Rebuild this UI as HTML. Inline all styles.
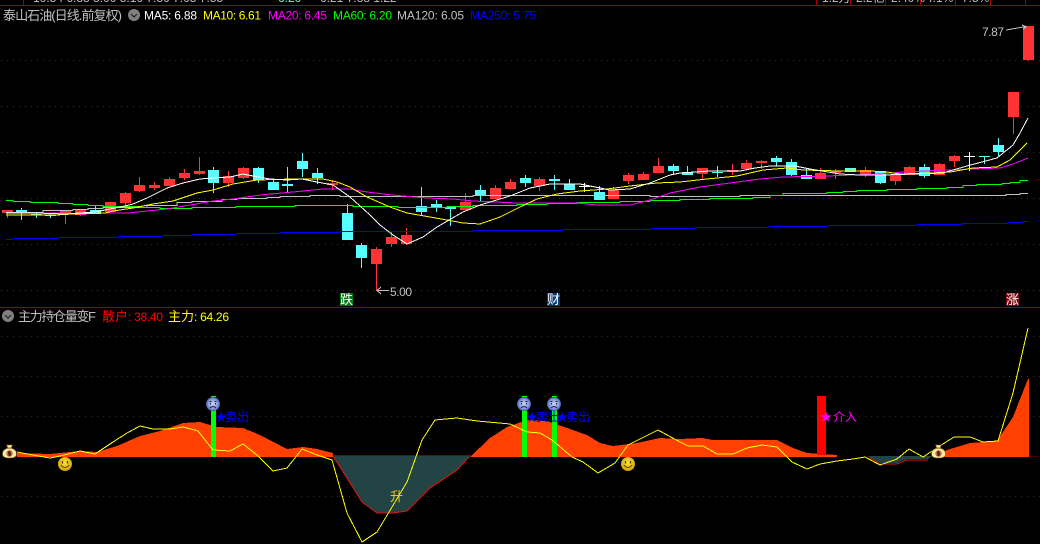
<!DOCTYPE html>
<html><head><meta charset="utf-8"><style>
html,body{margin:0;padding:0;background:#000;width:1040px;height:544px;overflow:hidden}
svg{display:block;position:absolute;left:0;top:0}
text{font-family:"WenQuanYi Zen Hei","Liberation Sans","Noto Sans CJK SC",sans-serif;font-size:12px;text-rendering:optimizeSpeed}
.n{font-family:"Liberation Sans","WenQuanYi Zen Hei",sans-serif;font-size:12px}
</style></head><body>
<svg width="1040" height="544" viewBox="0 0 1040 544" xmlns="http://www.w3.org/2000/svg">
<defs>
<radialGradient id="sg" cx=".5" cy=".5" r=".55"><stop offset="0" stop-color="#c8d4f4"/><stop offset=".65" stop-color="#8098e0"/><stop offset="1" stop-color="#303c80"/></radialGradient>
<radialGradient id="yg" cx=".5" cy=".4" r=".6"><stop offset="0" stop-color="#ffe030"/><stop offset="1" stop-color="#d0a010"/></radialGradient>
<g id="sad"><circle r="7" fill="url(#sg)"/><path d="M-3.5-2.5h2M1.5-2.500h2" stroke="#223" fill="none"/><path d="M-2.500-1v1.500M2.500-1v1.500" stroke="#223" fill="none"/><path d="M-3 4q3-3 6 0" stroke="#223" fill="none"/></g>
<g id="smile"><circle r="7" fill="url(#yg)"/><path d="M-2.500-3v2.500M2.500-3v2.500" stroke="#553c00" stroke-width="1.200" fill="none"/><path d="M-4 1q4 5 8 0" stroke="#553c00" fill="none"/></g>
<g id="bag"><path d="M-3-7h6l-1.500 3q6 2 5.500 6q0 4-6.500 4h-1q-6.500 0-6.500-4q-.5-4 5.500-6z" fill="#ffe9a0" stroke="#7a5a20" stroke-width=".6"/><rect x="-2.500" y="-4.500" width="5" height="1.200" fill="#9a6a20"/><circle cy="1.500" r="3.200" fill="#a87850"/><path d="M1.500 0h-2.500v1.500h2v1.500h-2.500M0-1v5" stroke="#6a1818" fill="none"/></g>
</defs>

<!-- top strip -->
<g class="n" fill="#c0c0c0"><text class="n" x="33" y="2">10.54 6.88 8.00 8.10 7.50 7.05 7.55</text></g>
<text class="n" x="278" y="2" fill="#5ff">6.20</text>
<text class="n" x="320" y="2" fill="#c0c0c0">6.21 7.88 1.22</text>
<text class="n" x="822" y="2" fill="#c0c0c0">1.2万</text><text class="n" x="856" y="2" fill="#c0c0c0">2.2亿</text><text class="n" x="891" y="2" fill="#c0c0c0">2.40%</text><text class="n" x="926" y="2" fill="#c0c0c0">4.1%</text><text class="n" x="962" y="2" fill="#c0c0c0">7.5%</text>
<g shape-rendering="crispEdges" stroke="#a00000" fill="none">
<path d="M0 5.500H1040M0 307.500H1040"/>
<path d="M23.500 0V5M816.500 0V5M850.500 0V5M885.500 0V5M920.500 0V5M955.500 0V5M990.500 0V5M1025.500 0V5"/>
</g>

<!-- dotted grid -->
<g shape-rendering="crispEdges" stroke="#a00000" stroke-dasharray="1 5" fill="none">
<path d="M1 60.500H1040M1 106.500H1040M1 152.500H1040M1 198.500H1040M1 244.500H1040M1 290.500H1040"/>
<path d="M1 336.500H1040M1 376.500H1040M1 416.500H1040M1 496.500H1040M1030 456.500H1040"/>
</g>

<!-- header text -->
<text x="3" y="20" font-size="13" fill="#c0c0c0" style="font-size:13px" textLength="119" lengthAdjust="spacing">泰山石油(日线.前复权)</text>
<circle cx="134" cy="15" r="6" fill="#808080"/><path d="M131 14l3 3 3-3" stroke="#222" stroke-width="1.200" fill="none"/>
<text class="n" x="144" y="19.500" fill="#fff" textLength="53">MA5: 6.88</text>
<text class="n" x="203" y="19.500" fill="#ff0" textLength="58">MA10: 6.61</text>
<text class="n" x="268" y="19.500" fill="#f0f" textLength="59">MA20: 6.45</text>
<text class="n" x="333" y="19.500" fill="#0f0" textLength="59">MA60: 6.20</text>
<text class="n" x="397" y="19.500" fill="#c0c0c0" textLength="67">MA120: 6.05</text>
<text class="n" x="470" y="19.500" fill="#00f" textLength="66">MA250: 5.75</text>

<!-- candles -->
<g shape-rendering="crispEdges">
<path fill="none" stroke="#ff3333" d="M7.500 210V218M65.500 211V224M80.500 210V216M125.500 192V206M139.500 177V192M154.500 182V190M169.500 177V186M184.500 169V180M199.500 157V175M228.500 171V187M243.500 167V179M332.500 180V190M376.500 247V291M391.500 232V247M406.500 228V245M465.500 193V210M495.500 185V199M510.500 179V190M539.500 177V191M613.500 187V199M628.500 173V184M643.500 172V180M658.500 158V173M702.500 168V179M732.500 164V175M746.500 160V170M761.500 160V169M820.500 168V179M835.500 169V179M865.500 167V177M895.500 175V185M909.500 166V175M939.500 163V175M954.500 155V167M1013.500 92V134M1028.500 26V61"/>
<path fill="#ff3333" d="M2 210h11v3h-11zM60 211h11v3h-11zM75 210h11v5h-11zM105 202h11v10h-11zM120 193h11v10h-11zM134 185h11v6h-11zM149 185h11v3h-11zM164 179h11v7h-11zM179 173h11v5h-11zM194 171h11v3h-11zM223 176h11v7h-11zM238 168h11v10h-11zM327 183h11v2h-11zM371 249h11v15h-11zM386 237h11v7h-11zM401 235h11v9h-11zM460 202h11v8h-11zM490 188h11v11h-11zM505 182h11v7h-11zM534 179h11v7h-11zM608 190h11v9h-11zM623 175h11v6h-11zM638 174h11v6h-11zM653 166h11v7h-11zM697 168h11v6h-11zM727 170h11v2h-11zM741 163h11v6h-11zM756 161h11v2h-11zM815 173h11v6h-11zM830 171h11v2h-11zM860 170h11v4h-11zM890 175h11v6h-11zM904 167h11v8h-11zM934 164h11v11h-11zM949 156h11v5h-11zM1008 92h11v25h-11zM1023 26h11v34h-11z"/>
<path fill="none" stroke="#55ffff" d="M21.500 208V220M36.500 213V218M50.500 213V218M95.500 206V214M213.500 167V193M258.500 167V183M273.500 180V190M287.500 167V193M302.500 153V177M317.500 168V184M347.500 204V240M361.500 243V268M421.500 187V216M436.500 200V212M450.500 207V226M480.500 185V202M525.500 175V187M554.500 175V190M569.500 179V190M599.500 186V200M673.500 164V175M687.500 166V175M717.500 166V177M776.500 156V166M791.500 159V176M806.500 168V179M880.500 171V184M924.500 164V178M984.500 156V164M998.500 138V156"/>
<path fill="#55ffff" d="M16 210h11v2h-11zM31 214h11v1h-11zM45 215h11v1h-11zM90 210h11v4h-11zM208 170h11v13h-11zM253 168h11v12h-11zM268 182h11v8h-11zM282 184h11v2h-11zM297 161h11v8h-11zM312 173h11v5h-11zM342 213h11v27h-11zM356 245h11v13h-11zM416 206h11v6h-11zM431 204h11v4h-11zM445 207h11v2h-11zM475 190h11v5h-11zM520 178h11v5h-11zM549 179h11v2h-11zM564 184h11v6h-11zM594 192h11v8h-11zM668 166h11v5h-11zM682 172h11v3h-11zM712 172h11v1h-11zM771 158h11v4h-11zM786 162h11v13h-11zM801 175h11v4h-11zM845 168h11v4h-11zM875 171h11v12h-11zM919 167h11v9h-11zM979 156h11v1h-11zM993 145h11v7h-11z"/>
<path fill="none" stroke="#fff" d="M584.500 183V192M579 186.500H590M969.500 152V171M964 156.500H975"/>
</g>

<!-- moving averages -->
<g fill="none" shape-rendering="crispEdges">
<path stroke="#0000ff" d="M6 239.500H13V238.500H58V237.500H118V236.500H162V235.500H192V234.500H237V233.500H280V232.500H340V231.500H473V230.500H562V229.500H651V228.500H695V227.500H769V226.500H828V225.500H917V224.500H962V223.500H1007V222.500H1022V221.500H1028"/>
<path stroke="#c0c0c0" d="M6 212.500H43V210.500H73V209.500H88V208.500H103V207.500H147V205.500H177V202.500H192V201.500H222V199.500H237V198.500H267V197.500H280V196.500H310V195.500H340V196.500H473V195.500H650V196.500H740V195.500H1006V194.500H1020V193.500H1028"/>
<path stroke="#00ff00" d="M6 200.500H13V201.500H30V202.500H58V203.500H73V204.500H88V205.500H103V206.500H140V207.500H160V208.500H192V207.500H236V206.500H295V205.500H353V206.500H398V207.500H447V206.500H473V205.500H517V204.500H547V203.500H577V202.500H620V201.500H650V200.500H680V199.500H710V198.500H753V197.500H770V195.500H783V193.500H827V192.500H843V191.500H857V190.500H887V189.500H917V188.500H947V187.500H963V185.500H977V184.500H1002V183.500H1010V182.500H1020V180.500H1028"/>
<polyline stroke="#ff00ff" points="6,213 56,213 83,214 100,213 128,213 147,211 167,209 190,205 213,201 233,199 260,195 293,192 323,189 350,189 360,191 383,194 403,196 427,198 453,199 473,201 517,203 577,203 597,205 630,205 650,200 670,193 680,191 700,187 730,183 760,179 783,177 827,176 880,174 903,172 947,170 1000,168 1013,164 1028,158"/>
<polyline stroke="#ffff00" points="6,215 56,215 72,214 105,213 113,211 133,208 153,204 173,201 197,193 213,190 233,184 257,180 293,179 323,179 337,182 350,187 367,197 390,207 407,213 430,217 447,220 463,223 480,224 500,217 520,207 537,199 557,194 580,191 607,189 630,186 657,183 680,182 707,179 737,176 763,170 787,168 803,170 840,171 870,171 887,172 900,174 933,173 950,172 973,168 997,167 1010,160 1027,143"/>
<polyline stroke="#ffffff" points="6,213 36,213 65,214 95,212 110,209 125,206 133,204 147,198 167,188 183,183 200,179 213,178 230,177 243,174 258,177 270,179 287,180 302,179 317,182 333,185 350,197 370,215 380,225 393,235 407,244 423,237 437,227 463,212 480,205 510,196 530,188 550,184 580,184 600,188 610,190 630,189 650,183 670,175 680,173 710,171 740,171 755,168 770,166 795,166 810,169 840,174 860,175 883,175 913,174 943,173 953,170 967,166 997,158 1013,145 1020,133 1028,118"/>
</g>

<!-- price labels -->
<text class="n" x="982" y="36" fill="#c0c0c0" textLength="22">7.87</text>
<path d="M1006 30L1026 26.500M1022 25l4 1.500-3 3" stroke="#c0c0c0" fill="none" shape-rendering="crispEdges"/>
<path d="M377 290.500H389M381 287l-4 3.500 4 3.500" stroke="#c0c0c0" fill="none" shape-rendering="crispEdges"/>
<text class="n" x="390" y="296" fill="#c0c0c0" textLength="22">5.00</text>

<!-- tags -->
<rect x="340" y="293" width="13" height="13" fill="#007a10"/><text x="340" y="304" fill="#fff" style="font-size:13px">跌</text>
<rect x="547" y="293" width="13" height="13" fill="#0a3a70"/><text x="547" y="304" fill="#fff" style="font-size:13px">财</text>
<rect x="1006" y="293" width="13" height="13" fill="#7a0a10"/><text x="1006" y="304" fill="#fff" style="font-size:13px">涨</text>

<!-- lower header -->
<circle cx="8" cy="316" r="6" fill="#808080"/><path d="M5 315l3 3 3-3" stroke="#222" stroke-width="1.200" fill="none"/>
<text x="18" y="321" fill="#c0c0c0" style="font-size:13px" textLength="78">主力持仓量变F</text>
<text x="102" y="321" fill="#ff0000" style="font-size:13px" textLength="26">散户</text>
<text class="n" x="128" y="321" fill="#ff0000" textLength="35">: 38.40</text>
<text x="168" y="321" fill="#ffff00" style="font-size:13px" textLength="26">主力</text>
<text class="n" x="194" y="321" fill="#ffff00" textLength="35">: 64.26</text>

<!-- lower panel -->
<g shape-rendering="crispEdges">
<path fill="#ff4000" d="M17 457V453L50 454L80 451L97 452L117 446L140 436L160 431L183 423L200 422L217 427L243 428L260 435L287 449L303 447L317 449L333 453V457z"/>
<path fill="#ff4000" d="M470 457L490 438L507 427L527 420L547 421L570 429L587 435L600 443L613 446L637 443L660 438L680 439L702 438L713 440L743 440L777 440L793 448L807 453L837 455V457z"/>
<path fill="#ff4000" d="M932 457L947 450L970 443L997 441L1013 417L1028 379H1029V457z"/>
<path fill="#224444" stroke="#e01010" d="M333 456L362 502L377 513L393 513L407 511L430 488L457 470L470 456z"/>
<path fill="#224444" d="M835 456H867L880 463L897 463L907 459L928 459L932 456z"/>
<path fill="none" stroke="#e01010" d="M870 458L880 464L897 464L907 460L928 460"/>
<rect x="333" y="456" width="137" height="1" fill="#224444"/>
<rect x="211" y="410" width="5" height="47" fill="#00ff00"/>
<rect x="522" y="410" width="5" height="47" fill="#00ff00"/>
<rect x="552" y="410" width="5" height="47" fill="#00ff00"/>
<rect x="211" y="396" width="5" height="1" fill="#00ff00"/>
<rect x="522" y="396" width="5" height="1" fill="#00ff00"/>
<rect x="552" y="396" width="5" height="1" fill="#00ff00"/>
<rect x="817" y="396" width="9" height="59" fill="#ff0000"/>
<polyline fill="none" stroke="#ffff00" points="17,452 33,455 50,458 60,456 80,451 95,454 113,442 127,433 140,426 153,429 170,429 183,427 198,431 213,450 230,451 243,444 257,455 273,471 287,468 302,449 317,455 332,460 347,513 362,542 377,532 392,507 407,482 422,440 435,420 457,418 477,421 510,424 527,432 540,433 552,440 572,457 583,462 598,473 615,463 628,445 658,430 680,442 688,446 703,446 717,454 733,454 747,448 762,445 777,447 792,462 807,469 820,464 837,461 853,459 865,457 880,465 897,459 909,449 923,457 943,444 954,437 970,437 983,442 998,441 1013,393 1028,328"/>
</g>
<text x="390" y="501" fill="#f0c020" style="font-size:13px">升</text>

<!-- signals -->
<g fill="#0000ff" style="font-size:13px">
<text x="215" y="421" fill="#0000ff" style="font-size:12px">★</text><text x="225" y="421" fill="#0000ff" style="font-size:12px" textLength="24">卖出</text>
<text x="526" y="421" fill="#0000ff" style="font-size:12px">★</text><text x="536" y="421" fill="#0000ff" style="font-size:12px" textLength="24">卖出</text>
<text x="556" y="421" fill="#0000ff" style="font-size:12px">★</text><text x="566" y="421" fill="#0000ff" style="font-size:12px" textLength="24">卖出</text>
</g>
<text x="820" y="421" fill="#ff00ff" style="font-size:12px">★</text><text x="833" y="421" fill="#ff00ff" style="font-size:12px" textLength="24">介入</text>

<!-- icons -->
<use href="#sad" x="213" y="404"/><use href="#sad" x="524" y="404"/><use href="#sad" x="554" y="404"/>
<use href="#smile" x="65" y="464"/><use href="#smile" x="628" y="464"/>
<use href="#bag" x="9.500" y="452"/><use href="#bag" x="938.500" y="452"/>
</svg>
</body></html>
